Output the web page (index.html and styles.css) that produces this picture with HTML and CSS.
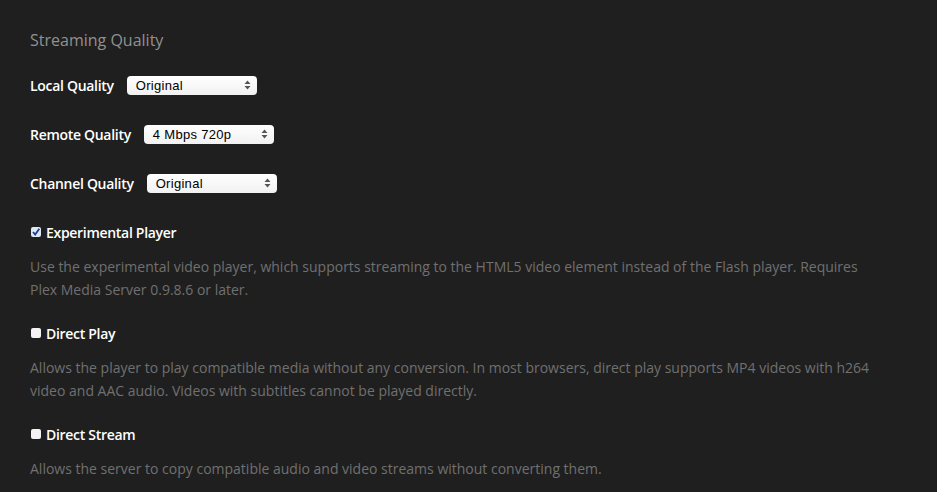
FILE: index.html
```html
<!DOCTYPE html>
<html lang="en">
<head>
  <meta charset="UTF-8" />
  <title>Settings - Streaming Quality</title>
  <link rel="stylesheet" href="styles.css">
</head>
<body>

  <div class="panel">
    <h2 class="section-title">Streaming Quality</h2>

    <div class="field">
      <label class="field-label">Local Quality</label>
      <div class="select">
        <span>Original</span>
        <svg class="arrows" width="7" height="10" viewBox="0 0 7 10"><path d="M3.5 0.5 L6.5 4 L0.5 4 Z M3.5 9.5 L6.5 6 L0.5 6 Z" fill="#555"/></svg>
      </div>
    </div>

    <div class="field">
      <label class="field-label">Remote Quality</label>
      <div class="select">
        <span>4 Mbps 720p</span>
        <svg class="arrows" width="7" height="10" viewBox="0 0 7 10"><path d="M3.5 0.5 L6.5 4 L0.5 4 Z M3.5 9.5 L6.5 6 L0.5 6 Z" fill="#555"/></svg>
      </div>
    </div>

    <div class="field">
      <label class="field-label">Channel Quality</label>
      <div class="select">
        <span>Original</span>
        <svg class="arrows" width="7" height="10" viewBox="0 0 7 10"><path d="M3.5 0.5 L6.5 4 L0.5 4 Z M3.5 9.5 L6.5 6 L0.5 6 Z" fill="#555"/></svg>
      </div>
    </div>

    <div class="option">
      <div class="option-label">
        <span class="checkbox checked">
          <svg width="10" height="10" viewBox="0 0 10 10"><path d="M2 5 L4.2 7.6 L8.3 1.8" fill="none" stroke="#1d3f8a" stroke-width="1.8"/></svg>
        </span>
        Experimental Player
      </div>
      <p class="option-desc">Use the experimental video player, which supports streaming to the HTML5 video element instead of the Flash player. Requires Plex Media Server 0.9.8.6 or later.</p>
    </div>

    <div class="option">
      <div class="option-label">
        <span class="checkbox"></span>
        Direct Play
      </div>
      <p class="option-desc">Allows the player to play compatible media without any conversion. In most browsers, direct play supports MP4 videos with h264 video and AAC audio. Videos with subtitles cannot be played directly.</p>
    </div>

    <div class="option">
      <div class="option-label">
        <span class="checkbox"></span>
        Direct Stream
      </div>
      <p class="option-desc">Allows the server to copy compatible audio and video streams without converting them.</p>
    </div>
  </div>

</body>
</html>
```

FILE: styles.css
```css
body {
  margin: 0;
  background-color: #1f1f1f;
  font-family: 'Open Sans', sans-serif;
  color: #fff;
}

.panel {
  width: 850px;
  padding: 28px 30px 0;
}

.section-title {
  margin: 0 0 23px;
  font-size: 16px;
  font-weight: normal;
  line-height: 24px;
  color: #919191;
}

.field {
  display: flex;
  align-items: center;
  gap: 13px;
  height: 20px;
  margin-bottom: 29px;
}

.field-label {
  font-size: 14px;
  font-weight: 600;
  letter-spacing: -0.3px;
}

.select {
  display: flex;
  align-items: center;
  justify-content: space-between;
  box-sizing: border-box;
  width: 130px;
  height: 19px;
  padding: 0 6px 0 9px;
  background: linear-gradient(#ffffff, #f1f1f1);
  border-radius: 4px;
  color: #000;
  font-family: 'Liberation Sans', sans-serif;
  font-size: 13px;
  letter-spacing: 0.3px;
}

.option {
  margin-bottom: 22px;
}

.option:last-child {
  margin-bottom: 0;
}

.option-label {
  display: flex;
  align-items: center;
  gap: 5px;
  height: 20px;
  padding-left: 1px;
  font-size: 14px;
  font-weight: 600;
  letter-spacing: -0.3px;
}

.checkbox {
  display: inline-flex;
  align-items: center;
  justify-content: center;
  width: 10px;
  height: 10px;
  border-radius: 2px;
  background-color: #f4f4f4;
}

.checkbox.checked {
  background-color: #dde8f7;
}

.option-desc {
  margin: 13px 0 0;
  font-size: 14px;
  line-height: 23px;
  color: #707070;
}
```
